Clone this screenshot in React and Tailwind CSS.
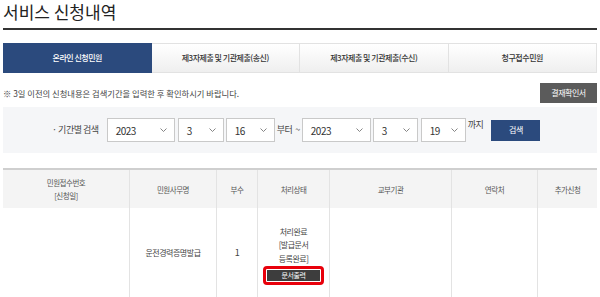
const tabs = ['온라인 신청민원', '제3자제출 및 기관제출(송신)', '제3자제출 및 기관제출(수신)', '청구접수민원'];

const columns = [
  ['민원접수번호', '[신청일]'],
  ['민원사무명'],
  ['부수'],
  ['처리상태'],
  ['교부기관'],
  ['연락처'],
  ['추가신청'],
];

function Select({ value, width }) {
  return (
    <div className={`flex shrink-0 items-center justify-between h-[24px] bg-white border border-[#c9c9c9] pl-[8px] pr-[7px] text-[10px] text-[#333] ${width}`}>
      <span>{value}</span>
      <svg width="7" height="4" viewBox="0 0 7 4" fill="none">
        <path d="M0.5 0.5 L3.5 3.5 L6.5 0.5" stroke="#777" strokeWidth="0.9" />
      </svg>
    </div>
  );
}

function App() {
  return (
    <div className="min-h-screen bg-white px-[3px] text-[#333] font-['Noto_Sans_CJK_KR','Noto_Sans',sans-serif] tracking-[-0.03em]">
      {/* Title */}
      <div className="h-[30px] pt-[1px] border-b-2 border-[#333]">
        <h1 className="text-[17px] leading-[21px] text-[#222] tracking-normal">서비스 신청내역</h1>
      </div>

      {/* Tabs */}
      <div className="mt-[13px] grid grid-cols-4 h-[30px]">
        {tabs.map((t, i) => (
          <div
            key={t}
            className={
              i === 0
                ? 'flex items-center justify-center bg-[#2b4a7d] text-white text-[8px] font-medium'
                : 'flex items-center justify-center bg-gradient-to-b from-white to-[#efefef] border border-[#e2e2e2] border-l-0 text-[#333] text-[8px] font-medium'
            }
          >
            {t}
          </div>
        ))}
      </div>

      {/* Notice */}
      <div className="mt-[10px] flex items-center justify-between h-[20px]">
        <p className="text-[8.3px] text-[#444] tracking-normal">
          ※ 3일 이전의 신청내용은 검색기간을 입력한 후 확인하시기 바랍니다.
        </p>
        <button className="h-[20px] w-[57px] bg-[#5b5b5b] text-white text-[8px]">결재확인서</button>
      </div>

      {/* Search */}
      <div className="mt-[4px] h-[46px] bg-[#f5f6f8] flex items-center pl-[49px] text-[9px] text-[#444] whitespace-nowrap">
        <span className="mr-[8px]">· 기간별 검색</span>
        <Select value="2023" width="w-[68px]" />
        <div className="w-[3px]" />
        <Select value="3" width="w-[46px]" />
        <div className="w-[2px]" />
        <Select value="16" width="w-[49px]" />
        <span className="ml-[2px] shrink-0">부터</span>
        <span className="ml-[3px] mr-[2px] shrink-0">~</span>
        <Select value="2023" width="w-[69px]" />
        <div className="w-[2px]" />
        <Select value="3" width="w-[45px]" />
        <div className="w-[3px]" />
        <Select value="19" width="w-[45px]" />
        <span className="ml-[2px] shrink-0 self-start mt-[11px]">까지</span>
        <button className="ml-[8px] shrink-0 h-[21px] w-[49px] bg-[#2b4a7d] text-white text-[8px]">검색</button>
      </div>

      {/* Table */}
      <div className="mt-[15px] border-t-2 border-[#cfcfcf]">
        <div className="grid grid-cols-[126px_87px_41px_72px_122px_86px_60px] h-[38px] bg-[#f4f4f4] text-[7.5px] text-[#555]">
          {columns.map((c, i) => (
            <div key={i} className={`flex flex-col items-center justify-center leading-[13px] ${i > 0 ? 'border-l border-[#e3e3e3]' : ''}`}>
              {c.map((line) => (
                <span key={line}>{line}</span>
              ))}
            </div>
          ))}
        </div>
        <div className="grid grid-cols-[126px_87px_41px_72px_122px_86px_60px] h-[92px] text-[8px] text-[#444]">
          <div />
          <div className="flex items-center justify-center border-l border-[#e3e3e3] pb-[2px]">운전경력증명발급</div>
          <div className="flex items-center justify-center border-l border-[#e3e3e3] pb-[2px] text-[9px]">1</div>
          <div className="flex flex-col items-center justify-center border-l border-[#e3e3e3] leading-[13.5px] pt-[2px]">
            <span>처리완료</span>
            <span>[발급문서</span>
            <span>등록완료]</span>
            <div className="mt-[1px] border-[3px] border-[#e8000b] rounded-[4px] p-[1px]">
              <div className="w-[53px] h-[11px] bg-[#3d3d3d] text-white text-[7px] leading-[11px] text-center">문서출력</div>
            </div>
          </div>
          <div className="border-l border-[#e3e3e3]" />
          <div className="border-l border-[#e3e3e3]" />
          <div className="border-l border-[#e3e3e3]" />
        </div>
      </div>
    </div>
  );
}

export default App;
